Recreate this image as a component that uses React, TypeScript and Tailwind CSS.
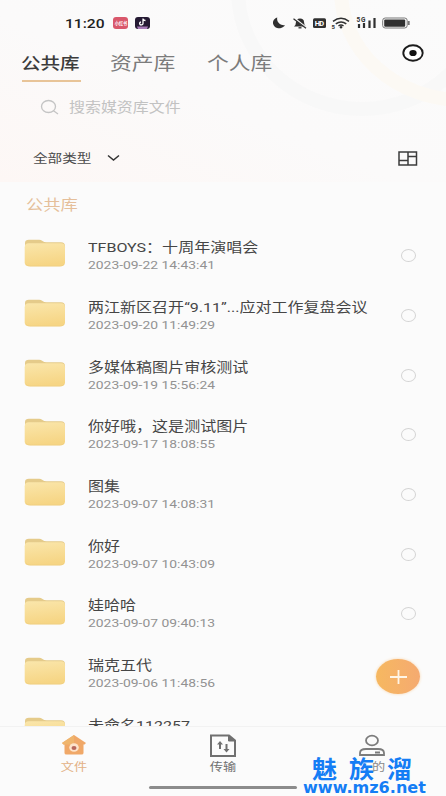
import React from 'react';

interface FolderItem {
    name: string;
    date?: string;
}

const folders: FolderItem[] = [
    { name: 'TFBOYS：十周年演唱会', date: '2023-09-22 14:43:41' },
    { name: '两江新区召开“9.11”...应对工作复盘会议', date: '2023-09-20 11:49:29' },
    { name: '多媒体稿图片审核测试', date: '2023-09-19 15:56:24' },
    { name: '你好哦，这是测试图片', date: '2023-09-17 18:08:55' },
    { name: '图集', date: '2023-09-07 14:08:31' },
    { name: '你好', date: '2023-09-07 10:43:09' },
    { name: '娃哈哈', date: '2023-09-07 09:40:13' },
    { name: '瑞克五代', date: '2023-09-06 11:48:56' },
    { name: '未命名112257' },
];

function FolderIcon() {
    return (
        <svg className="h-7 w-[42px] shrink-0" viewBox="0 0 42 28" fill="none">
            <defs>
                <linearGradient id="folder" x1="0" y1="0" x2="0.2" y2="1">
                    <stop stopColor="#fae6ab" />
                    <stop offset="1" stopColor="#f6d584" />
                </linearGradient>
            </defs>
            <path d="M1 4Q1 .8 5 .8h10q2 0 3.500 1.100t4 1.300H37q4 0 4 4v8H1Z" fill="#e5cb8a" />
            <rect x=".7" y="4.300" width="40.300" height="23" rx="4" fill="url(#folder)" />
            <path d="M2 25q1 2 4 2h30q3 0 4-2" stroke="#efce82" strokeWidth=".8" />
        </svg>
    );
}

function StatusBar() {
    return (
        <div className="flex h-[46px] items-center pl-[65px]">
            <span className="w-[48px]">
                <span className="inline-block origin-left scale-x-[1.2] text-[13px] font-medium leading-4 text-[#222]">11:20</span>
            </span>
            <span className="flex h-3 w-[15px] items-center justify-center rounded-[3px] bg-[#d9576b]">
                <span className="scale-[0.42] whitespace-nowrap text-[10px] font-bold text-white">小红书</span>
            </span>
            <svg className="ml-[7px] h-3 w-[15px]" viewBox="0 0 15 12">
                <rect width="15" height="12" rx="3" fill="#251a33" />
                <path d="M2 9.500h11L12 12H3Z" fill="#a77ab8" />
                <path d="M8 1.500v5a1.700 1.500 0 1 1-2-1.500M8 1.800q.5 1.700 2.500 1.700" fill="none" stroke="#fff" strokeWidth="1.300" />
            </svg>
            <svg className="ml-[123px] h-[14px] w-[138px]" viewBox="0 0 138 14">
                <path d="M4.300 1.500A6.300 5.500 0 1 0 12 9C8.500 10 3 6.500 4.300 1.500Z" fill="#303030" />
                <path d="M21 10.500q2-1.500 2-4.500 0-3.500 4-3.500t4 3.500q0 3 2 4.500Z" fill="#303030" />
                <path d="M25.500 11.800h3" stroke="#303030" strokeWidth="1.300" />
                <path d="m20.500 1.500 13 10.500" stroke="#fbfbfb" strokeWidth="1.800" />
                <path d="m20.500 2.700 12.500 9.500" stroke="#303030" strokeWidth="1.300" />
                <rect x="40" y="2.300" width="13" height="9.700" rx="1.500" fill="#303030" />
                <text x="41.700" y="10" fontSize="7.500" fontWeight="700" fill="#fff" textLength="9.500">HD</text>
                <path d="M60 5.300q8-6 16 0M62.800 7.900q5.300-4 10.500 0M65.500 10q2.500-2 5 0" fill="none" stroke="#303030" strokeWidth="1.500" />
                <circle cx="68" cy="11.300" r="1.200" fill="#303030" />
                <text x="58.500" y="12.500" fontSize="6" fontWeight="700" fill="#303030">5</text>
                <text x="83.500" y="6" fontSize="6.500" fontWeight="700" fill="#303030" textLength="9">5G</text>
                <path d="M86 12V8M91 12V7M96.500 12V4.500M101.500 12V2" stroke="#303030" strokeWidth="2.200" />
                <rect x="109.700" y="2" width="24.500" height="10" rx="2.500" fill="none" stroke="#777" strokeWidth="1" />
                <rect x="111.200" y="3.500" width="21" height="7.200" rx="1" fill="#303030" />
                <path d="M135.800 5v4" stroke="#777" strokeWidth="1.800" />
            </svg>
        </div>
    );
}

function Header() {
    return (
        <header className="relative h-[182px] overflow-hidden bg-linear-to-tr from-[#fdf7f5] via-[#fbfafa] via-45% to-[#fbfbfb]">
            <svg className="pointer-events-none absolute inset-0 h-full w-full" viewBox="0 0 446 182" fill="none">
                <ellipse cx="362" cy="-10" rx="124" ry="119" stroke="#f8f8f8" strokeWidth="14" />
                <ellipse cx="462" cy="-10" rx="121" ry="110" stroke="#fcf9f4" strokeWidth="14" />
            </svg>
            <div className="relative">
                <StatusBar />
                <div className="flex h-[38px]">
                    <div className="ml-[22px] w-[59px] pt-1">
                        <div className="h-7 w-[49px] origin-left -translate-x-px scale-x-[1.2] whitespace-nowrap pt-px text-[16.3px] font-medium leading-[26px] text-[#3c3c3c]">公共库</div>
                        <div className="mt-[2px] h-[2px] bg-[#e8c498]" />
                    </div>
                    <div className="ml-[29px] w-[97px] pt-[5px]">
                        <div className="w-[60px] origin-left scale-x-[1.21] whitespace-nowrap text-[18px] leading-[26px] text-[#7c7c7c]">资产库</div>
                    </div>
                    <div className="w-[195px] pt-[5px]">
                        <div className="w-[60px] origin-left scale-x-[1.21] whitespace-nowrap text-[18px] leading-[26px] text-[#7c7c7c]">个人库</div>
                    </div>
                    <svg className="-mt-[3px] h-5 w-[22px]" viewBox="0 0 22 20">
                        <ellipse cx="11" cy="10" rx="9.700" ry="7.700" fill="#fff" stroke="#1c1c1c" strokeWidth="1.900" />
                        <ellipse cx="11" cy="10" rx="3.700" ry="3.100" fill="#111" />
                    </svg>
                </div>
                <div className="flex h-[48px] items-center pl-10">
                    <svg className="-mt-[2px] h-[17px] w-5" viewBox="0 0 20 17" fill="none" stroke="#c4c4c4" strokeWidth="1.300">
                        <ellipse cx="8.500" cy="7.500" rx="7" ry="6" />
                        <path d="m13.500 11.800 4.500 3.200" />
                    </svg>
                    <span className="ml-[9px] origin-left scale-x-[1.2] text-[13.3px] text-[#c2c2c2]">搜索媒资库文件</span>
                </div>
                <div className="flex h-[52px] items-center pl-[33px]">
                    <span className="w-[74px]">
                        <span className="inline-block origin-left scale-x-[1.2] text-[12.2px] text-[#4a4a4a]">全部类型</span>
                    </span>
                    <svg className="-mt-px h-[8px] w-[13px]" viewBox="0 0 13 8" fill="none" stroke="#333" strokeWidth="1.500">
                        <path d="m1 1.500 5.500 4.500L12 1.500" />
                    </svg>
                    <svg className="ml-[278px] h-[15px] w-5" viewBox="0 0 20 15" fill="none" stroke="#3c3c3c" strokeWidth="1.500">
                        <path d="M1 1h17.500v13H1ZM10 1v13M1 9.500h9M10 5.500h8.500" />
                    </svg>
                </div>
            </div>
        </header>
    );
}

function FolderRow({ item }: { item: FolderItem }) {
    return (
        <li className="flex h-[59.7px] shrink-0 items-center pl-6 pr-[30px]">
            <div className="-mt-[6px]">
                <FolderIcon />
            </div>
            <div className="ml-[22px] h-9 min-w-0 flex-1">
                <div className="w-[240px] origin-left scale-x-[1.205] whitespace-nowrap text-[13.3px] leading-5 text-[#464646]">{item.name}</div>
                {item.date && (
                    <div className="w-[120px] origin-left scale-x-[1.24] whitespace-nowrap text-[11.2px] leading-4 text-[#929292]">{item.date}</div>
                )}
            </div>
            <span className="-mt-px h-[13px] w-[15px] shrink-0 rounded-[50%] border border-[#d4d4d4]" />
        </li>
    );
}

function BottomNav() {
    return (
        <nav className="relative h-[70px] border-t border-[#f2f2f2] bg-[#fbfbfb]">
            <div className="grid grid-cols-3">
                <div className="flex flex-col items-center pt-[7px]">
                    <svg className="h-[23px] w-[26px]" viewBox="0 0 26 23">
                        <path d="M13 1 1 9l1.500 1.500h1V19q0 1.500 2 1.500h15q2 0 2-1.500v-8.500h1L25 9Z" fill="#f0a868" />
                        <path d="M13 1 1 9l1.500 1.500H13Z" fill="#efb56d" />
                        <ellipse cx="13" cy="13.500" rx="4.800" ry="4.300" fill="#fde3ca" />
                        <ellipse cx="13" cy="14" rx="2.500" ry="2.100" fill="#b8685c" />
                    </svg>
                    <span className="mt-px scale-x-[1.2] text-[11px] leading-5 text-[#e3b286]">文件</span>
                </div>
                <div className="flex flex-col items-center pt-[7px]">
                    <svg className="h-[23px] w-7" viewBox="0 0 28 23" fill="none" stroke="#707070" strokeWidth="2">
                        <path d="M2 1.500h18l6 5V22H2Z" />
                        <path d="M19.500 1.500v5.500H26Z" fill="#707070" strokeWidth="1" />
                        <path d="M11 15V9.500M17.500 10v6" />
                        <path d="m11 7 3 3.500H8ZM17.500 18.500l3-3.500h-6Z" fill="#707070" stroke="none" />
                    </svg>
                    <span className="mt-px scale-x-[1.2] text-[11px] leading-5 text-[#707070]">传输</span>
                </div>
                <div className="flex flex-col items-center pt-[7px]">
                    <svg className="h-[23px] w-7" viewBox="0 0 28 23" fill="none" stroke="#7c7c7c" strokeWidth="1.800">
                        <ellipse cx="14" cy="6.500" rx="6" ry="4.800" />
                        <path d="M2 21v-2q0-4 6-4h12q6 0 6 4v2ZM17 18.500h5" />
                    </svg>
                    <span className="ml-[13px] mt-px scale-x-[1.2] text-[11px] leading-5 text-[#8a8a8a]">的</span>
                </div>
            </div>
            <div className="absolute bottom-[7px] left-[149px] h-[3px] w-[148px] rounded-full bg-[#8c8c8c]" />
            <div className="absolute left-[303px] top-[25px] w-[125px] text-[#147df5]">
                <div className="flex pl-[9px] font-['Noto_Sans_CJK_SC'] text-[25px] font-bold leading-[32px]">
                    <span className="w-[37px] scale-y-[0.95]">魅</span>
                    <span className="w-[38px] scale-y-[0.95]">族</span>
                    <span className="scale-y-[0.95]">溜</span>
                </div>
                <div className="-mt-[5px] w-[116px] origin-left scale-x-[1.07] whitespace-nowrap font-['DejaVu_Sans'] text-[15px] font-bold leading-[18px]">www.mz6.net</div>
            </div>
        </nav>
    );
}

export default function App() {
    return (
        <div className="relative flex h-[796px] w-[446px] flex-col overflow-hidden bg-[#fbfbfb] font-[Roboto,'Noto_Sans_CJK_SC',sans-serif]">
            <Header />
            <main className="min-h-0 flex-1 overflow-hidden">
                <div className="h-[44.5px] pl-[26px] pt-3">
                    <h2 className="w-[60px] origin-left scale-x-[1.2] text-[14.4px] leading-6 text-[#e5bf9a]">公共库</h2>
                </div>
                <ul>
                    {folders.map((item) => (
                        <FolderRow key={item.name} item={item} />
                    ))}
                </ul>
            </main>
            <button className="absolute left-[376px] top-[659px] flex h-[35px] w-11 items-center justify-center rounded-[50%] bg-linear-to-r from-[#f6b860] to-[#f5aa70] shadow-[0_0_3px_#f9d6ac]">
                <svg className="h-[14px] w-[17px]" viewBox="0 0 17 14" stroke="#fff5e6" strokeWidth="1.800">
                    <path d="M0 7h17M8.500 0v14" />
                </svg>
            </button>
            <BottomNav />
        </div>
    );
}
